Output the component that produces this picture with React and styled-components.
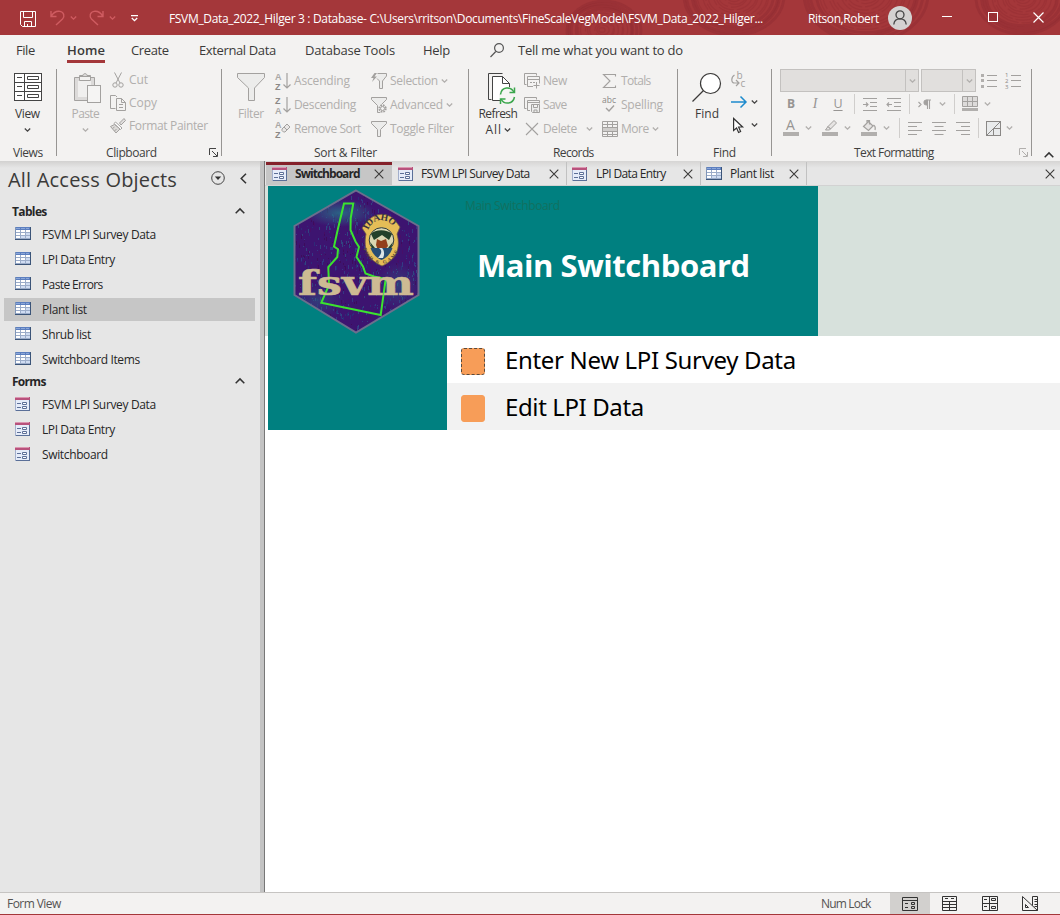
import React, { useLayoutEffect, useRef } from "react";
import styled, { createGlobalStyle, css } from "styled-components";

const UI = '"Open Sans", "Noto Sans", sans-serif';
const GREY = "#b1afad";
const LINE = "#a3a19f";
const INK = "#3b3a39";

const Global = createGlobalStyle`
  * { box-sizing: border-box; }
  html, body { margin: 0; height: 100%; overflow: hidden; }
  body { font: 12px/16px ${UI}; color: ${INK}; background: #fff; }
`;

/* ---------- text ---------- */
const TextSpan = styled.span`
  display: block;
  flex: none;
  width: ${(p) => p.$w}px;
  white-space: pre;
  font-family: ${(p) => p.$font || UI};
  font-size: ${(p) => p.$size || 12}px;
  line-height: ${(p) => Math.round((p.$size || 12) * 1.34)}px;
  font-weight: ${(p) => p.$weight || 400};
  color: ${(p) => p.$color || "inherit"};
  margin-left: ${(p) => p.$l || 0}px;
  margin-top: ${(p) => p.$t || 0}px;
`;

/* Spreads its text over a fixed width by adjusting the tracking. */
function Label({ children, w, l, t, size, weight, color, font }) {
  const ref = useRef(null);
  useLayoutEffect(() => {
    const el = ref.current;
    el.style.letterSpacing = "0px";
    const natural = el.getBoundingClientRect().width;
    el.style.letterSpacing = `${(w - natural) / (String(children).length - 0.5)}px`;
  }, [children, w]);
  return (
    <TextSpan $w={w} $l={l} $t={t} $size={size} $weight={weight} $color={color} $font={font}>
      <span ref={ref}>{children}</span>
    </TextSpan>
  );
}

/* ---------- icons ---------- */
const Svg = styled.svg`
  display: block;
  flex: none;
  margin-left: ${(p) => p.$l || 0}px;
  margin-top: ${(p) => p.$t || 0}px;
  fill: none;
  stroke: ${(p) => p.$c || LINE};
  stroke-width: ${(p) => p.$s || 1};
  overflow: visible;
`;

const SvgText = styled.text`
  stroke: none;
  font-family: ${(p) => p.$f || UI};
`;

function Icon({ w = 16, h = 16, l, t, c, s, children }) {
  return (
    <Svg width={w} height={h} viewBox={`0 0 ${w} ${h}`} $l={l} $t={t} $c={c} $s={s}>
      {children}
    </Svg>
  );
}

const Chevron = ({ l, t, c = GREY }) => (
  <Icon w={7} h={4} l={l} t={t} c={c} s={1.3}>
    <path d="M.8.5 3.5 3.2 6.2.5" />
  </Icon>
);

const FunnelPath = ({ d = "M.5 .5h15v2L9.5 8.5v7h-3v-7L.5 2.5z" }) => <path d={d} fill="#ececeb" />;

const TableIcon = ({ l }) => (
  <Icon w={16} h={13} l={l} c="none">
    <rect width="16" height="13" fill="#3b5478" />
    <rect width="15" height="3" fill="#5c7fbf" />
    <rect width="1" height="12" fill="#7f95b8" />
    <rect x="1" y="3" width="14" height="9" fill="#9bacc9" />
    {[0, 1, 2].map((r) =>
      [0, 1, 2].map((k) => (
        <rect key={`${r}${k}`} x={1 + k * 5} y={3 + r * 3} width="4" height="2" fill={r + k > 2 ? "#cfdcf2" : "#fff"} />
      ))
    )}
    <path d="M1 1.5h13" stroke="#8ba6d8" strokeDasharray="4 1" />
  </Icon>
);

const FormIcon = ({ l }) => (
  <Icon w={15} h={14} l={l} c="none">
    <rect width="15" height="14" fill="#5a6f98" />
    <rect x="1" y="3" width="13" height="10" fill="#e6ecf9" />
    <rect width="15" height="3" fill="#b8527c" />
    <rect width="14" height="1" fill="#dc96b1" />
    <path d="M.5 3v11" stroke="#a3afcb" />
    <path d="M2 6.500h4M2 10.500h4" stroke="#5d6f97" />
    <path d="M7.500 5.500h4v2h-4zM7.500 9.500h4v2h-4z" stroke="#5d6f97" fill="#fff" />
  </Icon>
);

const Cross = ({ l }) => (
  <Icon w={10} h={10} l={l} c="#3b3a39" s={1.1}>
    <path d="M.7.7 9.300 9.300M9.300.7.7 9.300" />
  </Icon>
);

const Up = ({ l, t }) => (
  <Icon w={10} h={6} l={l} t={t} c="#333" s={1.5}>
    <path d="M.7 5.200 5 .9l4.300 4.300" />
  </Icon>
);

const Launcher = styled(Svg)`
  position: absolute;
  right: ${(p) => p.$r}px;
  bottom: 4px;
`;

/* ---------- title bar ---------- */
const Window = styled.div`
  width: 1060px;
  height: 915px;
  display: flex;
  flex-direction: column;
  background: #fff;
`;

const TitleBar = styled.header`
  position: relative;
  height: 35px;
  flex: none;
  display: flex;
  align-items: center;
  background: #a4373a;
  color: #fff;
  overflow: hidden;
`;

const Rings = styled.svg`
  position: absolute;
  inset: 0;
  fill: none;
  stroke: #8f2c31;
`;

const TitleItems = styled.div`
  position: relative;
  display: flex;
  align-items: center;
  height: 35px;
  width: 100%;
`;

const Avatar = styled.div`
  width: 24px;
  height: 24px;
  margin-left: 9px;
  border-radius: 50%;
  background: #d4d2d1;
  display: grid;
  place-items: center;
`;

const RING_SETS = [
  [602, 30, 37, 12],
  [733, -4, 50, 14],
  [864, -6, 62, 15],
  [1022, -2, 46, 13],
];

function Title() {
  return (
    <TitleBar>
      <Rings width="1060" height="35">
        {RING_SETS.map(([x, y, r, n]) =>
          Array.from({ length: n }, (_, i) => (
            <ellipse
              key={`${x}-${i}`}
              cx={x + (i % 3)}
              cy={y}
              rx={(r * (i + 1)) / n}
              ry={(r * 0.78 * (i + 1)) / n}
              strokeWidth={i > n - 5 ? 2.8 : 1.2}
              strokeDasharray={i > n - 5 ? "none" : "22 3"}
              opacity={i > n - 5 ? 0.5 : 0.35}
            />
          ))
        )}
      </Rings>
      <TitleItems>
        <Icon l={20} t={3} c="#fff" s={1}>
          <path d="M.5.500h15v15h-13l-2-2zM3.500.500v6h9v-6M4.500 15.500v-5h7v5M7.500 15.500v-2.500" />
        </Icon>
        <Icon l={14} t={1} c="#cf5c61" s={1.4}>
          <path d="M1 1v5.500h5.500M1.300 6.200C3.500 2.300 7 1 10 1.400c4 .6 5 5 2.500 7.600L6 15" />
        </Icon>
        <Chevron l={4} c="#cf5c61" />
        <Icon l={11} t={1} c="#cf5c61" s={1.4}>
          <path d="M15 1v5.500H9.500M14.700 6.200C12.500 2.300 9 1 6 1.400 2 2 1 6.400 3.500 9L10 15" />
        </Icon>
        <Chevron l={5} c="#cf5c61" />
        <Icon w={7} h={7} l={15} t={1} c="#fff" s={1.3}>
          <path d="M0 .7h7M.8 3 3.500 5.700 6.200 3" />
        </Icon>
        <Label l={31} t={3} w={594} color="#fff">{"FSVM_Data_2022_Hilger 3 : Database- C:\\Users\\rritson\\Documents\\FineScaleVegModel\\FSVM_Data_2022_Hilger..."}</Label>
        <Label l={45} t={2} w={71} color="#fff">Ritson,Robert</Label>
        <Avatar>
          <Icon w={14} h={15} c="#444" s={1.3}>
            <circle cx="7" cy="4.800" r="4" />
            <path d="M.8 14.500c.3-3.700 2.600-5.700 6.200-5.700s5.900 2 6.200 5.700" />
          </Icon>
        </Avatar>
        <Icon w={10} h={1} l={30} t={-2} c="#fff"><path d="M0 .5h10" /></Icon>
        <Icon w={10} h={10} l={36} t={-1} c="#fff"><rect x=".5" y=".5" width="9" height="9" /></Icon>
        <Icon w={11} h={11} l={35} t={-1} c="#fff" s={1.2}><path d="m.5.500 10 10m0-10-10 10" /></Icon>
      </TitleItems>
    </TitleBar>
  );
}

/* ---------- menu ---------- */
const Menu = styled.nav`
  height: 31px;
  flex: none;
  display: flex;
  align-items: center;
  background: #f3f2f1;
`;

const MenuTab = styled.div`
  height: 31px;
  margin-left: ${(p) => p.$l}px;
  padding-top: 7px;
  ${(p) => p.$on && css`
    box-shadow: inset 0 -3px #f3f2f1, inset 0 -6px #a4373a;
  `}
`;

const MENU = [
  ["File", 16, 19],
  ["Home", 32, 38, true],
  ["Create", 26, 38],
  ["External Data", 30, 77],
  ["Database Tools", 29, 90],
  ["Help", 28, 27],
];

/* ---------- ribbon ---------- */
const Ribbon = styled.div`
  height: 95px;
  flex: none;
  display: flex;
  padding-top: 3px;
  background: #f3f2f1;
`;

const Group = styled.section`
  position: relative;
  width: ${(p) => p.$w}px;
  height: 92px;
  flex: none;
  display: flex;
  flex-direction: column;
`;

const GroupBody = styled.div`
  height: 76px;
  display: flex;
`;

const GroupTitle = styled.div`
  height: 16px;
  display: flex;
  color: #403f3e;
`;

const Separator = styled.div`
  width: 1px;
  height: 87px;
  flex: none;
  background: #979593;
`;

const BigButton = styled.div`
  width: ${(p) => p.$w}px;
  flex: none;
  display: flex;
  flex-direction: column;
  align-items: center;
  padding-top: 4px;
  margin-left: ${(p) => p.$l || 0}px;
  color: ${(p) => (p.$off ? GREY : INK)};
`;

const IconBox = styled.div`
  height: 33px;
`;

const Inline = styled.div`
  display: flex;
  align-items: center;
  height: 16px;
`;

const Column = styled.div`
  display: flex;
  flex-direction: column;
  margin-left: ${(p) => p.$l || 0}px;
`;

const SmallButton = styled.div`
  height: ${(p) => p.$h || 24}px;
  flex: none;
  display: flex;
  align-items: center;
  color: ${GREY};
`;

const Field = styled.div`
  width: ${(p) => p.$w}px;
  height: 23px;
  margin-right: 2px;
  display: flex;
  justify-content: flex-end;
  border: 1px solid #c3c1bf;
  background: #e1dfdd;
`;

const FieldArrow = styled.div`
  width: 13px;
  border-left: 1px solid #c3c1bf;
  display: grid;
  place-items: center;
`;

const Tools = styled.div`
  display: flex;
  align-items: center;
  height: ${(p) => p.$h}px;
`;

const Rule = styled.div`
  width: 1px;
  height: 20px;
  margin-left: ${(p) => p.$l}px;
  background: #d0cecc;
`;

const Glyph = styled.span`
  width: 10px;
  margin-left: ${(p) => p.$l}px;
  font: ${(p) => p.$f};
  text-align: center;
  color: #979593;
  text-decoration: ${(p) => (p.$u ? "underline" : "none")};
  text-underline-offset: 2px;
`;

const Collapse = styled.div`
  padding: 83px 0 0 12px;
`;

const Letter = ({ y, children }) => (
  <SvgText x="0" y={y} $f={'"Liberation Sans", sans-serif'} fontSize="9" fontWeight="700" fill={children === "Z" ? "#8a8886" : "#aaa8a6"}>{children}</SvgText>
);

function Sort({ a, b }) {
  return (
    <Icon s={1.2}>
      <Letter y="6.5">{a}</Letter>
      <Letter y="16.5">{b}</Letter>
      <path d="M12 0v15M8.500 11.500 12 15l3.500-3.500" />
    </Icon>
  );
}

const Lines = ({ d, l }) => <Icon w={14} h={13} l={l} s={1.1}><path d={d} /></Icon>;
const LauncherIcon = ({ r, c }) => (
  <Launcher width="9" height="9" $r={r} $c={c}>
    <path d="M.5 7V.5H7M3 3l5 5M8.500 4v4.500H4" />
  </Launcher>
);

function RibbonBar() {
  return (
    <Ribbon>
      <Group $w={56}>
        <GroupBody>
          <BigButton $w={55}>
            <IconBox>
              <Icon w={28} h={28} l={1} c="#444">
                <rect x=".5" y=".5" width="27" height="27" fill="#fff" />
                <path d="M.5 9.500h27M.5 18.500h27M10.500.500v27" />
                <path d="M3 4.500h5M3 13.500h5M3 22.500h5M13.500 3.500h11v3h-11zM13.500 12.500h11v3h-11zM13.500 21.500h11v3h-11z" />
              </Icon>
            </IconBox>
            <Label w={25}>View</Label>
            <Chevron c="#444" t={6} />
          </BigButton>
        </GroupBody>
        <GroupTitle><Label l={13} w={30}>Views</Label></GroupTitle>
      </Group>
      <Separator />

      <Group $w={164}>
        <GroupBody>
          <BigButton $w={31} $l={13} $off>
            <IconBox>
              <Icon w={28} h={31} l={3}>
                <path d="M1.500 4.500h5v-2h3.500C10 0 14 0 14 2.500h3.500v2h4v23h-20z" fill="#dcdad9" />
                <path d="M5 8h13v16H5z" fill="#f0efee" stroke="none" />
                <path d="M6.500 3.500h11v4h-11z" fill="#f3f2f1" />
                <rect x="14.500" y="12.500" width="13" height="17" fill="#f5f4f3" />
              </Icon>
            </IconBox>
            <Label w={28}>Paste</Label>
            <Chevron t={6} />
          </BigButton>
          <Column $l={9}>
            <SmallButton $h={22}>
              <Icon><path d="M4.500.500 10 11M11.500.500 6 11" /><circle cx="5" cy="13" r="2.200" /><circle cx="11" cy="13" r="2.200" /></Icon>
              <Label l={3} w={19}>Cut</Label>
            </SmallButton>
            <SmallButton $h={23}>
              <Icon><path d="M5.500 13.500h-5V.500h5l1.500 1.500M6.500 3.500h5l4 4v8h-9zM11.500 3.500v4h4M9 9.500h4M9 12.500h4" /></Icon>
              <Label l={3} w={28}>Copy</Label>
            </SmallButton>
            <SmallButton $h={23}>
              <Icon>
                <path d="m9.500 5 4.500-4.500 1.500 2L11 7z" fill="#e0dedd" />
                <path d="m5.500 4 6.500 6-1.500 1.500L4 5.500z" fill="#fff" />
                <path d="M4.500 6.500.5 8.500 6 15l4-4z" fill="#dddbd9" />
                <path d="m2.500 10.500 2-1.500M4.500 13l2-2" />
              </Icon>
              <Label l={3} w={79}>Format Painter</Label>
            </SmallButton>
          </Column>
        </GroupBody>
        <GroupTitle><Label l={49} w={51}>Clipboard</Label></GroupTitle>
        <LauncherIcon r={3} c="#444" />
      </Group>
      <Separator />

      <Group $w={246}>
        <GroupBody>
          <BigButton $w={28} $l={15} $off>
            <IconBox>
              <Icon w={28} h={29} l={-1}>
                <FunnelPath d="M.5.500h27v4L17.500 15v12.500h-6V15L.5 4.500z" />
              </Icon>
            </IconBox>
            <Label w={26}>Filter</Label>
          </BigButton>
          <Column $l={10}>
            <SmallButton><Sort a="A" b="Z" /><Label l={3} w={56}>Ascending</Label></SmallButton>
            <SmallButton><Sort a="Z" b="A" /><Label l={3} w={62}>Descending</Label></SmallButton>
            <SmallButton>
              <Icon><Letter y="6.5">A</Letter><Letter y="16.5">Z</Letter><path d="m7 8 5-5 3 3-5 5H8.500L7 9.500zM9 6l3 3" fill="#e8e6e5" /></Icon>
              <Label l={3} w={67}>Remove Sort</Label>
            </SmallButton>
          </Column>
          <Column $l={10}>
            <SmallButton>
              <Icon><path d="M6.500.500h9v2.500L11.500 8v7.500h-3V8L6 5.500" fill="#ececeb" /><path d="M3.500 0 0 5h2.500L1 9l5-5.500H3.500L6 0z" fill={LINE} stroke="none" /></Icon>
              <Label l={3} w={48}>Selection</Label><Chevron l={3} />
            </SmallButton>
            <SmallButton>
              <Icon><FunnelPath /><circle cx="11.500" cy="11.500" r="4.500" fill="#f3f2f1" stroke="none" /><circle cx="11.500" cy="11.500" r="3.300" strokeWidth="1.800" strokeDasharray="1.700 .89" /><circle cx="11.500" cy="11.500" r="2" /></Icon>
              <Label l={3} w={53}>Advanced</Label><Chevron l={3} />
            </SmallButton>
            <SmallButton><Icon><FunnelPath /></Icon><Label l={3} w={64}>Toggle Filter</Label></SmallButton>
          </Column>
        </GroupBody>
        <GroupTitle><Label l={92} w={63}>Sort &amp; Filter</Label></GroupTitle>
      </Group>
      <Separator />

      <Group $w={208}>
        <GroupBody>
          <BigButton $w={40} $l={9}>
            <IconBox>
              <Icon w={28} h={31} l={7} c="#444">
                <path d="M3.500 26.500h-3V.500h14" />
                <path d="M12.500 27.500h-8V3.500h10l7 7v4" fill="#fff" />
                <path d="M14.500 3.500v7h7" />
                <circle cx="19.500" cy="22.500" r="8.500" fill="#f6f5f4" stroke="none" />
                <g stroke="#3ba64c" strokeWidth="1.500">
                  <path d="M12.500 21.500c1-8 10.500-8.500 13.500-2M26.500 24c-1.500 7.500-10.500 8-13.500 2" />
                  <path d="M26.500 14.500v5h-5M12.500 31v-5h5" />
                </g>
              </Icon>
            </IconBox>
            <Label w={39}>Refresh</Label>
            <Inline><Label w={16}>All</Label><Chevron l={2} c="#444" /></Inline>
          </BigButton>
          <Column $l={6}>
            <SmallButton>
              <Icon><path d="M2.500 11.500h-2V.500h12v2M9 13.500H3.500v-10h12v7M3.500 6.500h12M6 9.500h2M9 9.500h2M12.500 9v6.500M9.500 12.500h6" /></Icon>
              <Label l={3} w={24}>New</Label>
            </SmallButton>
            <SmallButton>
              <Icon><path d="M2.500 11.500h-2V.500h12v2M6 13.500H3.500v-10h12v3M3.500 5.500h12" /><path d="M7.500 7.500h8v8h-7l-1-1zM9.500 7.500v3h4v-3M10 15.500v-2.500h3v2.500" fill="#ececeb" /></Icon>
              <Label l={3} w={24}>Save</Label>
            </SmallButton>
            <SmallButton>
              <Icon s={1.1}><path d="m2 2 12 12M14 2 2 14" /></Icon>
              <Label l={3} w={34}>Delete</Label><Chevron l={9} />
            </SmallButton>
          </Column>
          <Column $l={9}>
            <SmallButton>
              <Icon s={1.1}><path d="M13.500 3.500v-2h-12L8 8l-6.500 6.500h12v-2" /></Icon>
              <Label l={3} w={30}>Totals</Label>
            </SmallButton>
            <SmallButton>
              <Icon s={1.4}><SvgText x="0" y="5.500" fontSize="8.500" fill="#8a8886" textLength="14">abc</SvgText><path d="m4 11 3 3 5-5.500" /></Icon>
              <Label l={3} w={42}>Spelling</Label>
            </SmallButton>
            <SmallButton>
              <Icon><path d="M1 6h14v5H1z" fill="#cfcdcb" stroke="none" /><path d="M.5.500h15v15H.500zM.5 3.500h15M.5 6.500h15M.5 10.500h15M.5 13.500h15M5.500.500v6M10.500.500v6M5.500 10.500v5M10.500 10.500v5" /></Icon>
              <Label l={3} w={28}>More</Label><Chevron l={3} />
            </SmallButton>
          </Column>
        </GroupBody>
        <GroupTitle><Label l={84} w={41}>Records</Label></GroupTitle>
      </Group>
      <Separator />

      <Group $w={93}>
        <GroupBody>
          <BigButton $w={30} $l={14}>
            <IconBox>
              <Icon w={30} h={30} c="#3b3a39" s={1.200}>
                <circle cx="18.500" cy="10.500" r="10" fill="#fff" />
                <path d="m11.500 17.500-11 11" />
              </Icon>
            </IconBox>
            <Label w={24}>Find</Label>
          </BigButton>
          <Column $l={9}>
            <Tools $h={22}>
              <Icon s={1.200}>
                <SvgText x="5.500" y="7" fontSize="10" fill={LINE}>b</SvgText>
                <SvgText x="9.500" y="15" fontSize="10" fill={LINE}>c</SvgText>
                <path d="M3.500 3C0 5-.2 11 3.500 11H7.500M5 8l3 3-3 3" />
              </Icon>
            </Tools>
            <Tools $h={22}>
              <Icon c="#1e8bcd" s={1.500}><path d="M0 8h15M9.500 2.500 15 8l-5.500 5.500" /></Icon>
              <Chevron l={4} c="#444" />
            </Tools>
            <Tools $h={24}>
              <Icon c="#333" s={1.200}><path d="M2.600 1.500v12l3-2.500 2 4.500 2-1-2-4.500h4z" fill="#fff" /></Icon>
              <Chevron l={4} c="#444" />
            </Tools>
          </Column>
        </GroupBody>
        <GroupTitle><Label l={35} w={23}>Find</Label></GroupTitle>
      </Group>
      <Separator />

      <Group $w={259}>
        <GroupBody>
          <Column $l={8}>
            <Tools $h={23}>
              <Field $w={139}><FieldArrow><Chevron /></FieldArrow></Field>
              <Field $w={55}><FieldArrow><Chevron /></FieldArrow></Field>
              <Icon l={3} t={-2}>
                <path d="M6 3.500h10M6 8.500h10M6 14.500h10" />
                <path d="M0 2h3v3H0zM0 7h3v3H0zM0 13h3v3H0z" fill={GREY} stroke="none" />
              </Icon>
              <Icon l={8} t={-2}>
                <path d="M6 3.500h10M6 8.500h10M6 14.500h10" />
                <SvgText x="0" y="5" fontSize="6" fill="#8a8886">1</SvgText>
                <SvgText x="0" y="11" fontSize="6" fill="#8a8886">2</SvgText>
                <SvgText x="0" y="17" fontSize="6" fill="#8a8886">3</SvgText>
              </Icon>
            </Tools>
            <Tools $h={24}>
              <Glyph $l={6} $f={`700 12px/16px ${UI}`}>B</Glyph>
              <Glyph $l={14} $f={'italic 14px/16px "Liberation Serif", serif'}>I</Glyph>
              <Glyph $l={13} $f={`12.500px/16px ${UI}`} $u>U</Glyph>
              <Rule $l={11} />
              <Lines l={8} d="M0 .5h14M7 4.500h7M7 8.500h7M0 12.500h14M0 6.500h5M3 4.500l2 2-2 2" />
              <Lines l={10} d="M0 .5h14M7 4.500h7M7 8.500h7M0 12.500h14M0 6.500h5M2 4.500l-2 2 2 2" />
              <Rule $l={8} />
              <Icon w={13} h={11} l={8} s={1.100}>
                <path d="m.5 3 2.500 2.500L.5 8M9.500 10V1M11.500 10V1M13 1H8.500" />
                <path d="M9 1C5 .5 5 6.500 9 6z" fill={LINE} />
              </Icon>
              <Chevron l={8} />
              <Rule $l={8} />
              <Icon l={7}>
                <path d="M.5.500h15v10H.500zM.5 5.500h15M5.500.500v10M10.500.500v10" fill="#dddbda" />
                <path d="M0 12h16v3H0z" fill={GREY} stroke="none" />
              </Icon>
              <Chevron l={6} />
            </Tools>
            <Tools $h={24}>
              <Icon l={3}>
                <SvgText x="3" y="10" fontSize="14" fill="#979593">A</SvgText>
                <path d="M0 12h16v4H0z" fill={GREY} stroke="none" />
              </Icon>
              <Chevron l={6} />
              <Icon l={10}>
                <path d="m6 6.500 6-6 2.500 2.500-6 6zM6 6.500 3.500 10h4l1-1z" fill="#e6e4e3" />
                <path d="M0 12h16v4H0z" fill={GREY} stroke="none" />
              </Icon>
              <Chevron l={6} />
              <Icon l={10}>
                <path d="m2.500 6.500 5-5L12 6l-4.500 4.500zM6 3V.500h2.500v4M12.500 5c2 1 2 3 1.500 5" fill="#e6e4e3" strokeWidth="1.200" />
                <path d="M0 12h16v4H0z" fill={GREY} stroke="none" />
              </Icon>
              <Chevron l={6} />
              <Rule $l={9} />
              <Lines l={8} d="M0 .5h14M0 4.500h9M0 8.500h14M0 12.500h9" />
              <Lines l={10} d="M0 .5h14M2.500 4.500h9M0 8.500h14M2.500 12.500h9" />
              <Lines l={10} d="M0 .5h14M5 4.500h9M0 8.500h14M5 12.500h9" />
              <Rule $l={8} />
              <Icon w={15} h={15} l={7}>
                <rect x=".5" y=".5" width="14" height="14" fill="#e9ebec" stroke="#8a8886" />
                <path d="M.5 14.500l14-14M7.500 7.500v7M7.500 7.500h7" stroke="#8a8886" />
              </Icon>
              <Chevron l={5} />
            </Tools>
          </Column>
        </GroupBody>
        <GroupTitle><Label l={82} w={80}>Text Formatting</Label></GroupTitle>
        <LauncherIcon r={3} c={GREY} />
      </Group>
      <Separator />
      <Collapse><Up /></Collapse>
    </Ribbon>
  );
}

/* ---------- navigation pane ---------- */
const Main = styled.main`
  flex: 1;
  display: flex;
  min-height: 0;
`;

const Pane = styled.aside`
  width: 260px;
  flex: none;
  display: flex;
  flex-direction: column;
  background: linear-gradient(#d2d1d0, #e6e6e6 7px);
`;

const PaneHead = styled.div`
  height: 41px;
  flex: none;
  display: flex;
  align-items: center;
  padding: 0 0 4px 8px;
`;

const PaneGroup = styled.div`
  height: 20px;
  flex: none;
  display: flex;
  align-items: center;
  padding-left: 12px;
  color: #262626;
`;

const PaneItem = styled.div`
  height: 23px;
  flex: none;
  width: 251px;
  margin: 1px 0 1px 4px;
  padding-left: 11px;
  display: flex;
  align-items: center;
  color: #262626;
  background: ${(p) => (p.$on ? "#c6c6c6" : "transparent")};
`;

const IconSlot = styled.div`
  width: 27px;
  margin-top: ${(p) => p.$t}px;
`;

const Splitter = styled.div`
  width: 5px;
  flex: none;
  background: #c3c3c3;
  border-right: 1px solid #777;
`;

const TABLES = [
  ["FSVM LPI Survey Data", 114],
  ["LPI Data Entry", 73],
  ["Paste Errors", 61],
  ["Plant list", 45],
  ["Shrub list", 49],
  ["Switchboard Items", 98],
];
const FORMS = [
  ["FSVM LPI Survey Data", 114],
  ["LPI Data Entry", 73],
  ["Switchboard", 66],
];

function NavPane() {
  return (
    <Pane>
      <PaneHead>
        <Label w={169} size={20}>All Access Objects</Label>
        <Icon w={14} h={14} l={34} t={-3} c="#444">
          <circle cx="7" cy="7" r="6.300" />
          <path d="M3.800 5.500h6.400L7 9z" fill="#333" stroke="none" />
        </Icon>
        <Icon w={7} h={11} l={15} t={-3} c="#333" s={1.500}><path d="M6 .7 1.200 5.500 6 10.300" /></Icon>
      </PaneHead>
      <PaneGroup><Label w={35} weight={700}>Tables</Label><Up l={188} t={-3} /></PaneGroup>
      {TABLES.map(([name, w]) => (
        <PaneItem key={name} $on={name === "Plant list"}>
          <IconSlot $t={-2}><TableIcon /></IconSlot>
          <Label w={w}>{name}</Label>
        </PaneItem>
      ))}
      <PaneGroup><Label w={34} weight={700}>Forms</Label><Up l={189} t={-3} /></PaneGroup>
      {FORMS.map(([name, w]) => (
        <PaneItem key={name}>
          <IconSlot $t={-1}><FormIcon /></IconSlot>
          <Label w={w}>{name}</Label>
        </PaneItem>
      ))}
    </Pane>
  );
}

/* ---------- document area ---------- */
const Doc = styled.div`
  flex: 1;
  display: flex;
  flex-direction: column;
`;

const Tabs = styled.div`
  height: 25px;
  flex: none;
  display: flex;
  align-items: stretch;
  padding: 1px 0 0 1px;
  background: linear-gradient(#d6d5d4, #e6e6e6 7px);
  border-bottom: 1px solid #d2d2d2;
`;

const Tab = styled.div`
  width: ${(p) => p.$w}px;
  display: flex;
  align-items: center;
  padding-left: ${(p) => p.$p || 5}px;
  color: #262626;
  ${(p) => p.$on
    ? css`background: #c6c6c6; box-shadow: inset 0 3px #84212a;`
    : css`border-right: 1px solid #c1c1c1;`}
`;

const CloseSlot = styled.div`
  width: 15px;
  display: flex;
  align-items: center;
`;

const FormHeader = styled.div`
  height: 150px;
  flex: none;
  display: flex;
  padding-left: 3px;
  background: #d7e1dc;
`;

const Teal = styled.div`
  width: 550px;
  display: flex;
  background: #008080;
`;

const Logo = styled.svg`
  display: block;
  flex: none;
  width: 179px;
  height: 150px;
`;

const Heads = styled.div`
  padding: 12px 0 0 18px;
`;

const Heading = styled.div`
  padding: 30px 0 0 12px;
`;

const FormBody = styled.div`
  display: flex;
  height: 94px;
  padding-left: 3px;
`;

const TealSide = styled.div`
  width: 179px;
  background: #008080;
`;

const Options = styled.div`
  flex: 1;
`;

const Option = styled.div`
  height: 47px;
  display: flex;
  align-items: center;
  padding: 3px 0 0 14px;
  background: ${(p) => (p.$alt ? "#f2f2f2" : "#fff")};
`;

const OptionButton = styled.div`
  width: 24px;
  height: 27px;
  border-radius: 3px;
  background: #f79d58;
  border: 1px ${(p) => (p.$focus ? "dashed #5a4a3c" : "solid #f79d58")};
`;

const OptionText = styled.div`
  margin: -2px 0 0 20px;
  color: #000;
`;

/* Deterministic speckles for the satellite-like texture behind the state outline. */
const SPECKS = Array.from({ length: 900 }, (_, i) => {
  const a = (Math.sin(i * 12.9898) * 43758.5453) % 1;
  const b = (Math.sin(i * 78.233) * 12543.123) % 1;
  return {
    x: Math.round(26 + Math.abs(a) * 124),
    y: Math.round(6 + Math.abs(b) * 138),
    c: ["#33408a", "#2f4f86", "#2b2f7c", "#4a0e66", "#3d0a58"][i % 5],
  };
});
const HEX = "M88 4.500 150.500 40v69L88 146.500 26.500 109V40z";
const IDAHO =
  "M76 17.5H85.300L82.700 32 82.500 44 87.500 55.500 91 61 88.500 71 95 80.500 97.500 87.500 106 90.500 117.700 93 112.700 129 53.300 116.700 61 99 60.300 81 69.300 71 70 63.300 66 60.500 70 42.500z";

function FsvmLogo() {
  return (
    <Logo viewBox="0 0 179 150">
      <defs>
        <clipPath id="hex"><path d={HEX} /></clipPath>
        <radialGradient id="sky"><stop stopColor="#26758a" stopOpacity=".8" /><stop offset="1" stopColor="#26758a" stopOpacity="0" /></radialGradient>
        <path id="arcTop" d="M102 43c5-13 21-13 26-1" />
        <path id="arcLow" d="M102 60c4 15 21 16 26 1" />
      </defs>
      <g clipPath="url(#hex)">
        <rect width="179" height="150" fill="#3d1470" />
        {SPECKS.map((s, i) => <rect key={i} x={s.x} y={s.y} width="1" height={1 + (i % 4)} fill={s.c} opacity=".8" />)}
        <ellipse cx="72" cy="27" rx="36" ry="14" fill="url(#sky)" />
        <ellipse cx="50" cy="115" rx="26" ry="18" fill="url(#sky)" opacity=".5" />
        <ellipse cx="130" cy="100" rx="22" ry="24" fill="url(#sky)" opacity=".5" />
      </g>
      <path d={HEX} fill="none" stroke="#6b6f8d" strokeWidth="2" />
      <path d={IDAHO} fill="none" stroke="#3be32f" strokeWidth="2" />
      <g transform="translate(-2 1)">
        <path d="M96 41l4-5c9-12 24-11 31 0l3 4-3 7c4 14-1 26-15 32-14-6-19-17-16-32z" fill="#e5bd57" stroke="#6d5b4a" strokeWidth=".8" />
        <circle cx="115.500" cy="53" r="12.300" fill="#d9d6b2" stroke="#2e3b3e" />
        <path d="M105 47c4-5 16-5 21 0l-3 6-7-5-8 5zM104 55l5 6h-3zM127 55l-5 6h3z" fill="#22402a" />
        <path d="M111 52l4 2 5-2 2 7-4 5-6-1-2-5z" fill="#93401c" />
        <path d="M104.500 61h22c-2 6-6 10-11 12-5-2-9-6-11-12z" fill="#284e75" />
        <path d="M113 61c4 3 2 6-1 10h5c2-4 1-8-1-10z" fill="#dbe5e7" />
        <text fontFamily="Liberation Serif, serif" fontWeight="700" fontSize="9.500" fill="#38333f"><textPath href="#arcTop" textLength="31">IDAHO</textPath></text>
        <text fontFamily="Liberation Serif, serif" fontWeight="700" fontSize="5" fill="#5d4b35" dy="5"><textPath href="#arcLow" textLength="36">FISH &amp; GAME</textPath></text>
      </g>
      <text x="30" y="108.500" fontFamily="DejaVu Serif, serif" fontWeight="700" fontSize="34" fill="#cdbb93" stroke="#cdbb93" strokeWidth=".6" textLength="116" lengthAdjust="spacingAndGlyphs">fsvm</text>
    </Logo>
  );
}

const Fill = styled.div`
  flex: 1;
`;

function Document() {
  return (
    <Doc>
      <Tabs>
        <Tab $w={126} $p={6} $on><FormIcon /><Label l={8} w={65} weight={700}>Switchboard</Label><Cross l={14} /></Tab>
        <Tab $w={175} $p={6}><FormIcon /><Label l={8} w={109}>FSVM LPI Survey Data</Label><Cross l={19} /></Tab>
        <Tab $w={134}><FormIcon /><Label l={9} w={70}>LPI Data Entry</Label><Cross l={17} /></Tab>
        <Tab $w={106}><TableIcon /><Label l={8} w={44}>Plant list</Label><Cross l={15} /></Tab>
        <Fill />
        <CloseSlot><Cross /></CloseSlot>
      </Tabs>
      <FormHeader>
        <Teal>
          <FsvmLogo />
          <Heads>
            <Label w={95} size={12} color="#12705f">Main Switchboard</Label>
            <Heading><Label w={273} size={31} weight={700} color="#fff">Main Switchboard</Label></Heading>
          </Heads>
        </Teal>
      </FormHeader>
      <FormBody>
        <TealSide />
        <Options>
          <Option>
            <OptionButton $focus />
            <OptionText><Label w={291} size={24} font={'"Noto Sans", sans-serif'}>Enter New LPI Survey Data</Label></OptionText>
          </Option>
          <Option $alt>
            <OptionButton />
            <OptionText><Label w={139} size={24} font={'"Noto Sans", sans-serif'}>Edit LPI Data</Label></OptionText>
          </Option>
        </Options>
      </FormBody>
    </Doc>
  );
}

/* ---------- status bar ---------- */
const Status = styled.footer`
  height: 23px;
  flex: none;
  display: flex;
  align-items: center;
  background: #f3f2f1;
  border-top: 1px solid #c6c4c2;
  border-bottom: 1px solid #a4373a;
  color: #555352;
`;

const ViewSet = styled.div`
  display: flex;
  margin-left: 19px;
  padding-right: 10px;
`;

const ViewButton = styled.div`
  width: 40px;
  height: 21px;
  display: flex;
  align-items: center;
  padding-left: 12px;
  background: ${(p) => (p.$on ? "#d2d0ce" : "transparent")};
`;

function StatusBar() {
  return (
    <Status>
      <Label l={7} w={54}>Form View</Label>
      <Fill />
      <Label w={50}>Num Lock</Label>
      <ViewSet>
        <ViewButton $on>
          <Icon h={15} t={-1} c="#333"><path d="M.5 1.500h15v13H.500zM.5 4.500h15M3 7.500h3M3 11.500h3M9.500 6.500h3v2h-3zM9.500 10.500h3v2h-3z" /></Icon>
        </ViewButton>
        <ViewButton>
          <Icon w={15} h={15} t={-1} c="#333"><path d="M.5.500h14v14H.500zM.5 5.500h14M.5 8.500h14M.5 11.500h14M7.500 5.500v9M3 2.500h3M9 2.500h3" /></Icon>
        </ViewButton>
        <ViewButton>
          <Icon h={15} t={-1} c="#333"><path d="M.5.500h15v14H.500zM.5 7.500h15M7.500.500v14M2 3.500h3M2 10.500h3M9.500 2.500h4v2h-4zM9.500 10.500h4v2h-4z" /></Icon>
        </ViewButton>
        <ViewButton>
          <Icon h={15} t={-1} c="#333"><path d="M.5.500v14h15zM3.500 8.500v3h3zM10.500 9.500v-9h5v14M12.500 3.500h3M12.500 5.500h3M12.500 8.500h3M12.500 10.500h3" /></Icon>
        </ViewButton>
      </ViewSet>
    </Status>
  );
}

export default function App() {
  return (
    <Window>
      <Global />
      <Title />
      <Menu>
        {MENU.map(([name, l, w, on]) => (
          <MenuTab key={name} $l={l} $on={on}>
            <Label w={w} size={13} weight={on ? 600 : 400}>{name}</Label>
          </MenuTab>
        ))}
        <Icon w={14} h={15} l={40} c="#555" s={1.200}>
          <circle cx="9" cy="5" r="4.400" /><path d="M5.800 8.500.5 14" />
        </Icon>
        <Label l={14} w={165} size={13}>Tell me what you want to do</Label>
      </Menu>
      <RibbonBar />
      <Main>
        <NavPane />
        <Splitter />
        <Document />
      </Main>
      <StatusBar />
    </Window>
  );
}
